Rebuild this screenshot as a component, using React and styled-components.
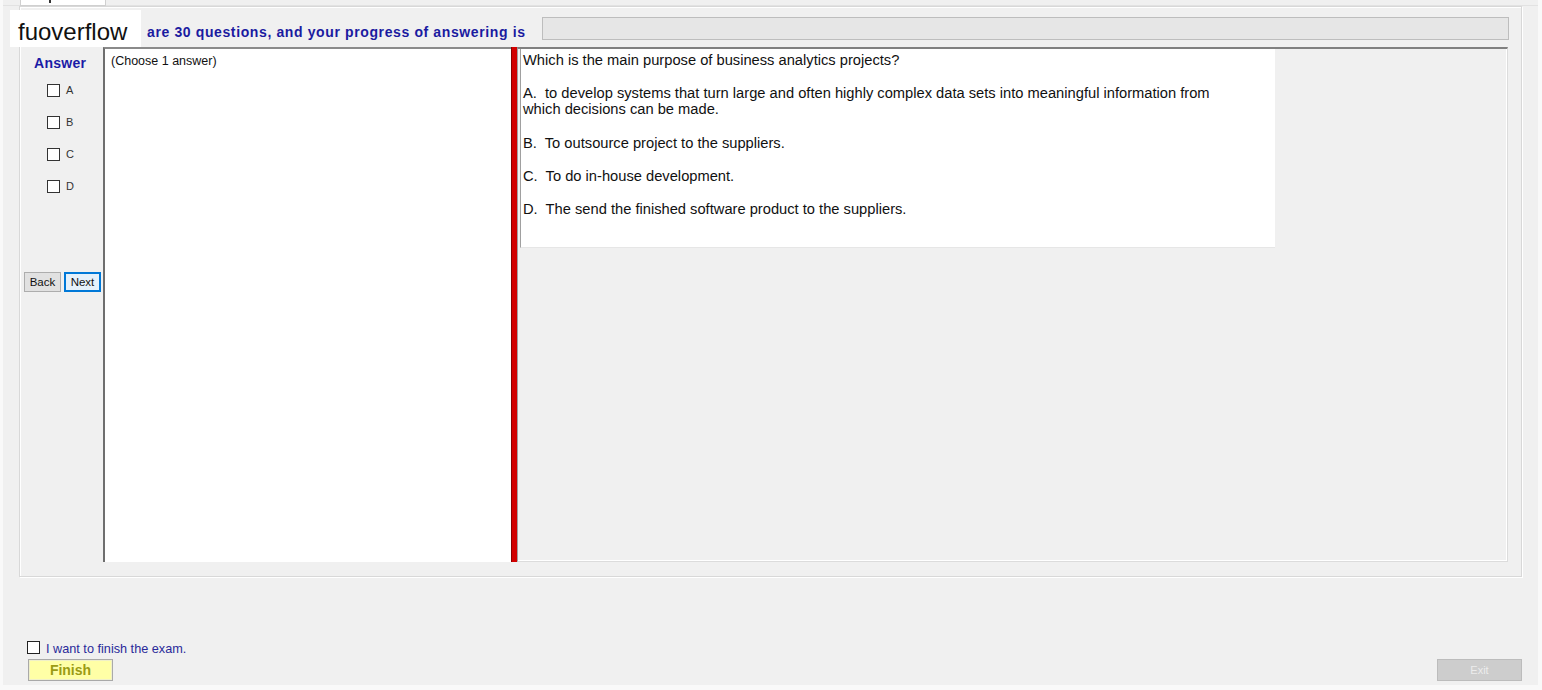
import styled, { createGlobalStyle } from "styled-components";

const GlobalStyle = createGlobalStyle`
  html, body {
    margin: 0;
    padding: 0;
    background: #f9f9f9;
  }
  body {
    font-family: "Liberation Sans", Arial, sans-serif;
  }
`;

const options = ["A", "B", "C", "D"];

const Frame = styled.div`
  position: relative;
  width: 1535px;
  height: 685px;
  margin-left: 3px;
  background: #f0f0f0;
  display: flex;
  flex-direction: column;
`;

const TabStrip = styled.div`
  height: 6px;
  display: flex;
  border-bottom: 1px solid #e2e2e2;
  box-sizing: border-box;
`;

const Tab = styled.div`
  position: relative;
  margin-left: 17px;
  width: 86px;
  height: 6px;
  background: #fff;
  border: 1px solid #d0d0d0;
  border-top: none;
  box-sizing: border-box;

  &::after {
    content: "";
    position: absolute;
    left: 28px;
    top: 0;
    width: 2px;
    height: 3px;
    background: #333;
  }
`;

const Group = styled.div`
  margin-left: 16px;
  width: 1503px;
  height: 571px;
  box-sizing: border-box;
  border: 1px solid #d8d8d8;
  box-shadow: inset 1px 1px 0 #fff, 1px 1px 0 #fff;
  display: flex;
  flex-direction: column;
`;

const Header = styled.div`
  height: 40px;
  display: flex;
  align-items: flex-start;
`;

const Watermark = styled.div`
  position: absolute;
  left: 7px;
  top: 10px;
  width: 131px;
  height: 37px;
  box-sizing: border-box;
  padding: 6px 0 0 8px;
  background: #fff;
  color: #111;
  font-size: 24px;
  line-height: 32px;
`;

const ProgressText = styled.div`
  margin: 17px 0 0 127px;
  font-size: 14px;
  font-weight: 700;
  letter-spacing: 0.62px;
  line-height: 16px;
  color: #1b1ba0;
  white-space: nowrap;
`;

const ProgressBar = styled.div`
  flex: 1;
  height: 23px;
  margin: 10px 12px 0 16px;
  box-sizing: border-box;
  background: #e6e6e6;
  border: 1px solid #bdbdbd;
`;

const Body = styled.div`
  display: flex;
  height: 515px;
  margin-left: 3px;
`;

const Sidebar = styled.div`
  width: 80px;
  display: flex;
  flex-direction: column;
`;

const AnswerTitle = styled.div`
  margin: 8px 0 0 11px;
  font-size: 14px;
  font-weight: 700;
  letter-spacing: 0.3px;
  line-height: 16px;
  color: #1b1ba6;
`;

const OptionList = styled.div`
  margin: 12px 0 0 24px;
  display: flex;
  flex-direction: column;
  gap: 18px;
`;

const Option = styled.label`
  display: flex;
  align-items: center;
  height: 14px;
  gap: 6px;
  font-size: 11px;
  color: #333;
`;

const Box = styled.span`
  width: ${(p) => p.$size}px;
  height: ${(p) => p.$size}px;
  box-sizing: border-box;
  background: #fff;
  border: 1px solid ${(p) => (p.$dark ? "#222" : "#333")};
  flex: none;
`;

const NavRow = styled.div`
  margin: 79px 0 0 1px;
  display: flex;
  gap: 3px;
`;

const NavButton = styled.div`
  width: 37px;
  height: 20px;
  box-sizing: border-box;
  display: flex;
  align-items: center;
  justify-content: center;
  font-size: 11.5px;
  color: #111;
  background: ${(p) => (p.$focused ? "#e5f1fb" : "#e1e1e1")};
  border: ${(p) => (p.$focused ? "2px solid #0078d7" : "1px solid #adadad")};
`;

const ChoicePanel = styled.div`
  width: 408px;
  box-sizing: border-box;
  padding: 4px 0 0 6px;
  background: #fff;
  border-left: 2px solid #6e6e6e;
  border-top: 2px solid #8a8a8a;
  font-size: 12.5px;
  line-height: 16px;
  color: #111;
`;

const Splitter = styled.div`
  width: 6px;
  box-sizing: border-box;
  background: #d20000;
  border-left: 1px solid #8a0000;
`;

const QuestionArea = styled.div`
  width: 991px;
  box-sizing: border-box;
  padding-left: 2px;
  background: #f0f0f0;
  border-top: 2px solid #808080;
  border-left: 1px solid #a0a0a0;
  border-right: 1px solid #dcdcdc;
  border-bottom: 1px solid #dcdcdc;
  box-shadow: inset -1px -1px 0 #fff;
`;

const QuestionBox = styled.div`
  width: 755px;
  height: 199px;
  box-sizing: border-box;
  padding: 3px 0 0 2px;
  background: #fff;
  border-left: 1px solid #a0a0a0;
  border-bottom: 1px solid #e6e6e6;
  font-size: 14.7px;
  line-height: 16px;
  color: #111;
`;

const Para = styled.p`
  margin: 0 0 ${(p) => (p.$gap ? p.$gap : 17)}px;
`;

const FinishCheck = styled.label`
  margin: 62px 0 0 24px;
  display: flex;
  align-items: center;
  gap: 6px;
  height: 16px;
  font-size: 12.7px;
  color: #2a2a9a;

  span:last-child {
    padding-top: 3px;
  }
`;

const ButtonRow = styled.div`
  margin: 4px 0 0 25px;
  width: 1494px;
  display: flex;
  justify-content: space-between;
`;

const FinishButton = styled.div`
  width: 85px;
  height: 22px;
  box-sizing: border-box;
  display: flex;
  align-items: center;
  justify-content: center;
  background: #ffffa6;
  border: 1px solid #a9a9a9;
  box-shadow: inset 0 0 0 1px #f0f0c8;
  font-size: 14px;
  font-weight: 700;
  color: #9b9b14;
`;

const ExitButton = styled.div`
  width: 85px;
  height: 22px;
  box-sizing: border-box;
  display: flex;
  align-items: center;
  justify-content: center;
  background: #cdcdcd;
  border: 1px solid #bcbcbc;
  font-size: 11px;
  color: #ececec;
`;

const App = () => {
  return (
    <>
      <GlobalStyle />
      <Frame>
        <TabStrip>
          <Tab />
        </TabStrip>
        <Group>
          <Header>
            <ProgressText>are 30 questions, and your progress of answering is</ProgressText>
            <ProgressBar />
          </Header>
          <Body>
            <Sidebar>
              <AnswerTitle>Answer</AnswerTitle>
              <OptionList>
                {options.map((o) => (
                  <Option key={o}>
                    <Box $size={13} />
                    {o}
                  </Option>
                ))}
              </OptionList>
              <NavRow>
                <NavButton>Back</NavButton>
                <NavButton $focused>Next</NavButton>
              </NavRow>
            </Sidebar>
            <ChoicePanel>(Choose 1 answer)</ChoicePanel>
            <Splitter />
            <QuestionArea>
              <QuestionBox>
                <Para>Which is the main purpose of business analytics projects?</Para>
                <Para $gap={18}>
                  A.&nbsp; to develop systems that turn large and often highly complex data sets into meaningful information from
                  <br />
                  which decisions can be made.
                </Para>
                <Para>B.&nbsp; To outsource project to the suppliers.</Para>
                <Para>C.&nbsp; To do in-house development.</Para>
                <Para>D.&nbsp; The send the finished software product to the suppliers.</Para>
              </QuestionBox>
            </QuestionArea>
          </Body>
        </Group>
        <FinishCheck>
          <Box $size={13} $dark />
          <span>I want to finish the exam.</span>
        </FinishCheck>
        <ButtonRow>
          <FinishButton>Finish</FinishButton>
          <ExitButton>Exit</ExitButton>
        </ButtonRow>
        <Watermark>fuoverflow</Watermark>
      </Frame>
    </>
  );
};

export default App;
